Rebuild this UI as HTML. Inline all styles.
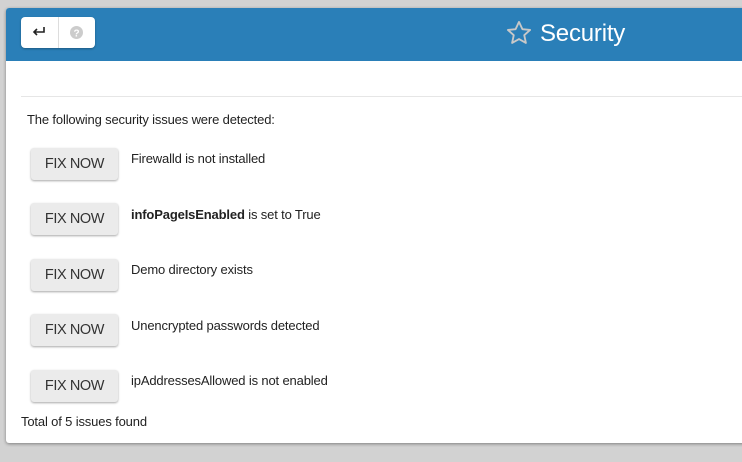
<!DOCTYPE html>
<html><head><style>
body{margin:0;width:742px;height:462px;background:#d2d2d2;font-family:"Liberation Sans",sans-serif;overflow:hidden;position:relative}
.card{position:absolute;left:6px;top:8px;width:760px;height:435px;background:#fff;border-radius:3px;box-shadow:0 1px 3px rgba(0,0,0,.4);overflow:hidden}
.hdr{position:absolute;left:0;top:0;right:0;height:53px;background:#2a7fb8}
.bg{position:absolute;left:15px;top:9px;width:74px;height:31px;background:#fff;border-radius:4px;box-shadow:0 1px 2px rgba(0,0,0,.3)}
.sep{position:absolute;left:37px;top:0;width:1px;height:31px;background:#ddd}
.title{position:absolute;left:534px;top:12px;color:#fff;font-size:24px;letter-spacing:-0.2px}
.star{position:absolute;left:499px;top:11px}
.div{position:absolute;left:15px;top:88px;right:0;height:1px;background:#e6e6e6}
.t{position:absolute;font-size:13px;color:#222;letter-spacing:-0.15px}
.btn{position:absolute;left:25px;width:87px;height:32px;background:#ebebeb;border-radius:3px;box-shadow:0 1px 2px rgba(0,0,0,.35);font-size:14.5px;color:#333;text-align:center;line-height:32px;letter-spacing:-0.4px}
</style></head><body>
<div class="card">
<div class="hdr">
<div class="bg"><svg style="position:absolute;left:10px;top:8px" width="16" height="14" viewBox="0 0 16 14"><path d="M13 2v5H3M6 4L3 7l3 3" stroke="#222" stroke-width="1.6" fill="none"/></svg><div class="sep"></div><svg style="position:absolute;left:49px;top:9px" width="13" height="13"><circle cx="6.5" cy="6.5" r="6.5" fill="#ccc"/><text x="6.5" y="10.5" font-size="10" font-weight="bold" fill="#fff" text-anchor="middle" font-family="Liberation Sans">?</text></svg></div>
<svg class="star" width="28" height="28" viewBox="0 0 24 24"><path d="M12 2.5l2.9 6.2 6.6.7-5 4.5 1.4 6.6L12 17.2l-5.9 3.3 1.4-6.6-5-4.5 6.6-.7z" fill="none" stroke="#c8c8c8" stroke-width="1.6" stroke-linejoin="round"/></svg>
<div class="title">Security</div>
</div>
<div class="div"></div>
<div class="t" style="left:21px;top:104px">The following security issues were detected:</div>
<div class="btn" style="top:140px">FIX NOW</div><div class="t" style="left:125px;top:143px">Firewalld is not installed</div>
<div class="btn" style="top:195px">FIX NOW</div><div class="t" style="left:125px;top:199px"><b>infoPageIsEnabled</b> is set to True</div>
<div class="btn" style="top:251px">FIX NOW</div><div class="t" style="left:125px;top:254px">Demo directory exists</div>
<div class="btn" style="top:306px">FIX NOW</div><div class="t" style="left:125px;top:310px">Unencrypted passwords detected</div>
<div class="btn" style="top:362px">FIX NOW</div><div class="t" style="left:125px;top:365px">ipAddressesAllowed is not enabled</div>
<div class="t" style="left:15px;top:406px">Total of 5 issues found</div>
</div>
</body></html>
